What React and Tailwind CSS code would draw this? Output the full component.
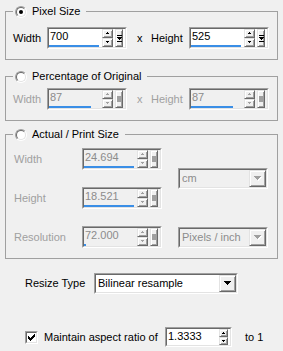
import React from "react";

const font = "font-['Liberation_Sans',Arial,sans-serif] text-[11px]";

// small pixel triangle
const Arrow = ({ dir = "down", size = 3, color = "#000", emboss = false }) => {
  const rows = [];
  for (let i = 0; i < size; i++) {
    const w = dir === "down" ? (size - i) * 2 - 1 : i * 2 + 1;
    const x = size - 1 - (w - 1) / 2;
    if (emboss) rows.push(<rect key={"e" + i} x={x + 1} y={i + 1} width={w} height={1} fill="#fff" />);
    rows.push(<rect key={i} x={x} y={i} width={w} height={1} fill={color} />);
  }
  return (
    <svg width={size * 2} height={size + 1} shapeRendering="crispEdges" className="block">
      {rows}
    </svg>
  );
};

const Raised = ({ className = "", children }) => (
  <div
    className={`flex items-center justify-center bg-[#f0f0f0] border border-t-[#e3e3e3] border-l-[#e3e3e3] border-b-[#696969] border-r-[#696969] shadow-[inset_1px_1px_0_#fff,inset_-1px_-1px_0_#a0a0a0] ${className}`}
  >
    {children}
  </div>
);

const Sunken = ({ className = "", inner = "", children }) => (
  <div className={`flex border border-t-[#a0a0a0] border-l-[#a0a0a0] border-b-white border-r-white ${className}`}>
    <div className={`flex flex-1 border border-t-[#696969] border-l-[#696969] border-b-[#e3e3e3] border-r-[#e3e3e3] ${inner}`}>
      {children}
    </div>
  </div>
);

const SpinEdit = ({ value, bar, disabled }) => {
  const c = disabled ? "#a0a0a0" : "#000";
  return (
    <Sunken className="h-[22px] w-[80px]" inner={disabled ? "bg-[#f0f0f0]" : "bg-white"}>
      <div className="flex w-[53px] flex-col">
        <span className={`block pl-[1px] pt-[1px] leading-[13px] ${disabled ? "text-[#8c8c8c]" : "text-black"}`}>
          {value}
        </span>
        <div className="mt-auto h-[2px] bg-[#3a8ee6]" style={{ width: bar }} />
      </div>
      <div className="flex w-[11px] flex-col">
        <Raised className="h-[9px]">
          <Arrow dir="up" size={2} color={c} />
        </Raised>
        <Raised className="h-[9px]">
          <Arrow dir="down" size={2} color={c} />
        </Raised>
      </div>
      <Raised className="ml-[2px] w-[8px] flex-col">
        {disabled ? (
          <div className="h-[6px] w-[4px] bg-[#a0a0a0]" />
        ) : (
          <svg width="5" height="9" shapeRendering="crispEdges" className="block">
            <rect x="0" y="1" width="5" height="1" fill="#000" />
            <rect x="0" y="3" width="5" height="1" fill="#000" />
            <rect x="1" y="4" width="3" height="1" fill="#000" />
            <rect x="2" y="5" width="1" height="1" fill="#000" />
            <rect x="0" y="7" width="5" height="1" fill="#000" />
          </svg>
        )}
      </Raised>
    </Sunken>
  );
};

const Combo = ({ text, width, disabled }) => (
  <Sunken className={`h-[21px] ${width}`} inner={`items-center ${disabled ? "bg-[#f0f0f0]" : "bg-white"}`}>
    <span className={`flex-1 pl-[2px] ${disabled ? "text-[#8c8c8c]" : "text-black"}`}>{text}</span>
    <Raised className="h-[17px] w-[17px]">
      <Arrow dir="down" size={4} color={disabled ? "#a0a0a0" : "#000"} emboss={disabled} />
    </Raised>
  </Sunken>
);

const Radio = ({ checked }) => (
  <span className="flex h-[12px] w-[12px] rounded-full border border-t-[#a0a0a0] border-l-[#a0a0a0] border-b-white border-r-white">
    <span className="flex flex-1 items-center justify-center rounded-full border border-t-[#696969] border-l-[#696969] border-b-[#e3e3e3] border-r-[#e3e3e3] bg-white">
      {checked && <span className="h-[4px] w-[4px] rounded-full bg-black" />}
    </span>
  </span>
);

const Group = ({ title, checked, className = "", children }) => (
  <fieldset className={`border border-[#a0a0a0] ${className}`}>
    <legend className="ml-[7px] h-[15px] pl-[2px] pr-[6px] leading-[15px]">
      <span className="flex items-center gap-[5px] text-black">
        <Radio checked={checked} />
        {title}
      </span>
    </legend>
    {children}
  </fieldset>
);

const SizeRow = ({ w, h, bar, disabled }) => (
  <div className={`flex items-center pl-[7px] ${disabled ? "text-[#a0a0a0]" : "text-black"}`}>
    <span className="w-[34px]">Width</span>
    <SpinEdit value={w} bar={bar} disabled={disabled} />
    <span className="ml-[10px] w-[14px]">x</span>
    <span className="w-[38px]">Height</span>
    <SpinEdit value={h} bar={bar} disabled={disabled} />
  </div>
);

export default function App() {
  return (
    <div className={`h-[351px] w-[283px] overflow-hidden bg-[#f0f0f0] px-[5px] pt-[4px] ${font}`}>
      {/* Pixel Size */}
      <Group title="Pixel Size" checked className="pb-[10px]">
        <div className="pt-[8px]">
          <SizeRow w="700" h="525" bar={50} />
        </div>
      </Group>

      {/* Percentage */}
      <Group title="Percentage of Original" className="mt-[9px] pb-[10px]">
        <div className="pt-[4px]">
          <SizeRow w="87" h="87" bar={42} disabled />
        </div>
      </Group>

      {/* Actual / Print */}
      <Group title="Actual / Print Size" className="mt-[6px]">
        <div className="grid grid-cols-[52px_80px_90px] items-center gap-x-[16px] gap-y-[17px] pb-[10px] pl-[8px] pt-[6px] text-[#a0a0a0]">
          <span>Width</span>
          <SpinEdit value="24.694" bar={50} disabled />
          <div className="row-span-2">
            <Combo text="cm" width="w-[90px]" disabled />
          </div>
          <span>Height</span>
          <SpinEdit value="18.521" bar={50} disabled />
          <span>Resolution</span>
          <SpinEdit value="72.000" bar={2} disabled />
          <Combo text="Pixels / inch" width="w-[90px]" disabled />
        </div>
      </Group>

      {/* Resize type */}
      <div className="mt-[14px] flex items-center pl-[20px] text-black">
        <span className="w-[69px]">Resize Type</span>
        <Combo text="Bilinear resample" width="w-[144px]" />
      </div>

      {/* Aspect ratio */}
      <div className="mt-[33px] flex items-center pl-[20px] text-black">
        <Sunken className="h-[13px] w-[13px]" inner="bg-white items-center justify-center">
          <svg width="7" height="7" shapeRendering="crispEdges" className="block">
            <path d="M0 2h1v3h-1zM1 3h1v3h-1zM2 4h1v3h-1zM3 3h1v3h-1zM4 2h1v3h-1zM5 1h1v3h-1zM6 0h1v3h-1z" fill="#000" />
          </svg>
        </Sunken>
        <span className="ml-[6px] w-[121px]">Maintain aspect ratio of</span>
        <Sunken className="h-[20px] w-[67px]" inner="bg-white">
          <span className="flex-1 pl-[1px] pt-[1px] leading-[13px]">1.3333</span>
          <div className="mr-[2px] flex w-[9px] flex-col">
            <Raised className="h-[8px]">
              <Arrow dir="up" size={2} />
            </Raised>
            <Raised className="h-[8px]">
              <Arrow dir="down" size={2} />
            </Raised>
          </div>
        </Sunken>
        <span className="ml-[13px]">to 1</span>
      </div>
    </div>
  );
}
